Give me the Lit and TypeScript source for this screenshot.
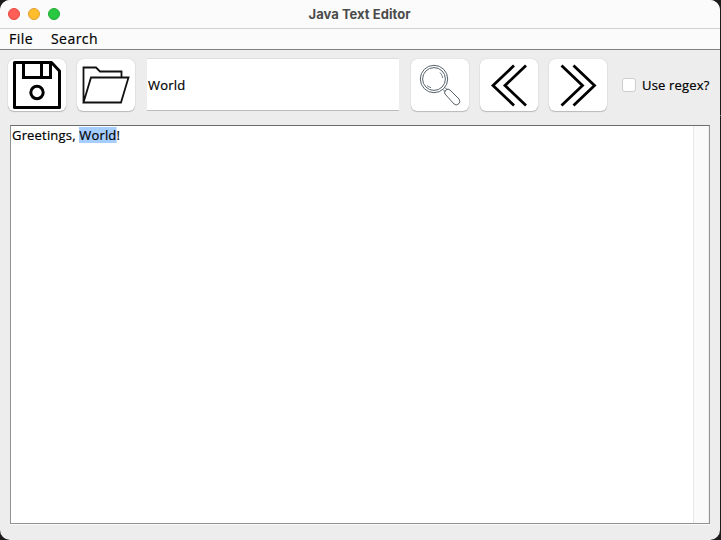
import { LitElement, html, svg, css } from "lit";
import { customElement, property } from "lit/decorators.js";

const icons = {
  save: svg`<g fill="none" stroke="#000" stroke-width="3"><path d="M6.500 3.500H43.500L51.500 12V48.500H6.500Z" stroke-linejoin="round"/><path d="M15.500 3V18.500H42.500V3M33.500 3V18"/><circle cx="29" cy="33.500" r="6.200"/></g>`,
  open: svg`<g fill="none" stroke="#111" stroke-width="1.800"><path d="M6.500 43V8.500H19L23 12.500H44.500V18M6.500 43.500L14 18.500H51.500L44 43.500Z"/></g>`,
  find: svg`<g fill="none" stroke="#56636b" stroke-width="1"><circle cx="23" cy="20" r="13.700"/><circle cx="23" cy="20" r="11.400"/><path d="M29 13.500A9.300 9.300 0 0 1 31.700 19M16 26.500A9.300 9.300 0 0 0 20 28.700" stroke-width=".8"/><path d="M32 30.500L34.200 32.700M34 28.500L36.500 31"/><path d="M34 35Q32.500 33 35 31Q37 29 39 31L48 40Q50 43 47.500 45Q45 47 43 45Z"/></g>`,
  prev: svg`<path d="M34 6.500L13 26.500L34 46.500M46 6.500L25 26.500L46 46.500" fill="none" stroke="#000" stroke-width="2.800"/>`,
  next: svg`<path d="M12.500 6.500L33.500 26.500L12.500 46.500M24.500 6.500L45.500 26.500L24.500 46.500" fill="none" stroke="#000" stroke-width="2.800"/>`,
};

@customElement("tool-button")
class ToolButton extends LitElement {
  @property() icon: keyof typeof icons = "save";
  static styles = css`
    :host { display: block; flex: none; width: 58px; height: 52px; }
    .button { display: block; width: 58px; height: 52px; padding: 0; border: 0; border-radius: 6px; background: #fff; box-shadow: 0 0 1px rgba(0,0,0,.25), 0 1px 1px rgba(0,0,0,.2); }
    svg { display: block; }
  `;
  render() {
    return html`<button class="button" aria-label=${this.icon}><svg width="58" height="52" viewBox="0 0 58 52">${icons[this.icon]}</svg></button>`;
  }
}

@customElement("app-root")
class AppRoot extends LitElement {
  static styles = css`
    :host { display: block; height: 540px; background: linear-gradient(#777, #777) right 115px / 1px 1px no-repeat, #1c1c1c; font: 13px/16px "Open Sans", "Noto Sans", sans-serif; color: #000; }
    .window { box-sizing: border-box; width: 720px; height: 540px; border-radius: 10px; overflow: hidden; background: #ededed; display: flex; flex-direction: column; }
    .title { box-sizing: border-box; flex: none; height: 29px; border-bottom: 1px solid #d1d1d1; background: #fbfbfb; display: grid; grid-template-columns: 60px 1fr 60px; align-items: center; }
    .lights { display: flex; gap: 8px; padding-left: 8px; }
    .light { box-sizing: border-box; width: 12px; height: 12px; flex: none; border-radius: 50%; border: 1px solid #e2463f; background: #ff5f57; }
    .yellow { background: #febc2e; border-color: #e1a032; }
    .green { background: #28c840; border-color: #24aa35; }
    .name { padding-right: 1px; text-align: center; font: bold 13px/16px Inter, sans-serif; color: #4b4b4b; }
    .name span { letter-spacing: .03px; }
    .menu { box-sizing: border-box; flex: none; height: 21px; border-bottom: 1px solid #818181; background: #fbfbfb; display: flex; gap: 18px; padding-left: 9px; font-size: 14px; line-height: 20px; letter-spacing: .45px; }
    .tools { flex: none; height: 52px; padding: 9px 10px 0 8px; display: flex; gap: 11px; }
    .field { box-sizing: border-box; flex: none; width: 252px; margin: 0 1px; border-bottom: 1px solid #bdbdbd; background: #fff; box-shadow: 0 -1px #dedede; padding-left: 1px; line-height: 53px; }
    .field, .check, .text { letter-spacing: .18px; }
    .menu, .field, .check, .text { -webkit-text-stroke: .2px #000; }
    .check { display: flex; align-items: center; gap: 6px; margin-left: 4px; white-space: nowrap; }
    .box { box-sizing: border-box; width: 14px; height: 14px; border: 1px solid #cecece; border-radius: 3px; background: #fff; }
    .editor { box-sizing: border-box; flex: none; margin: 14px 10px 0; height: 399px; border: 1px solid #929292; border-top-color: #6c6c6c; background: #fff; display: flex; box-shadow: 0 1px #fafafa; }
    .text { flex: 1; padding: 1px; white-space: pre; }
    .selected { background: linear-gradient(#a5cdff, #a5cdff) center / 100% 16px no-repeat; }
    .scroll { box-sizing: border-box; width: 16px; border-left: 1px solid #e7e7e7; border-right: 1px solid #ededed; background: #fafafa; }
  `;
  render() {
    return html`<div class="window">
      <header class="title"><div class="lights"><i class="light"></i><i class="light yellow"></i><i class="light green"></i></div><div class="name"><span>Java Text Editor</span></div></header>
      <nav class="menu"><span>File</span><span>Search</span></nav>
      <div class="tools">
        <tool-button icon="save"></tool-button><tool-button icon="open"></tool-button>
        <div class="field">World</div>
        <tool-button icon="find"></tool-button><tool-button icon="prev"></tool-button><tool-button icon="next"></tool-button>
        <label class="check"><span class="box"></span><span>Use regex?</span></label>
      </div>
      <main class="editor"><div class="text">Greetings, <span class="selected">World</span>!</div><div class="scroll"></div></main>
    </div>`;
  }
}
